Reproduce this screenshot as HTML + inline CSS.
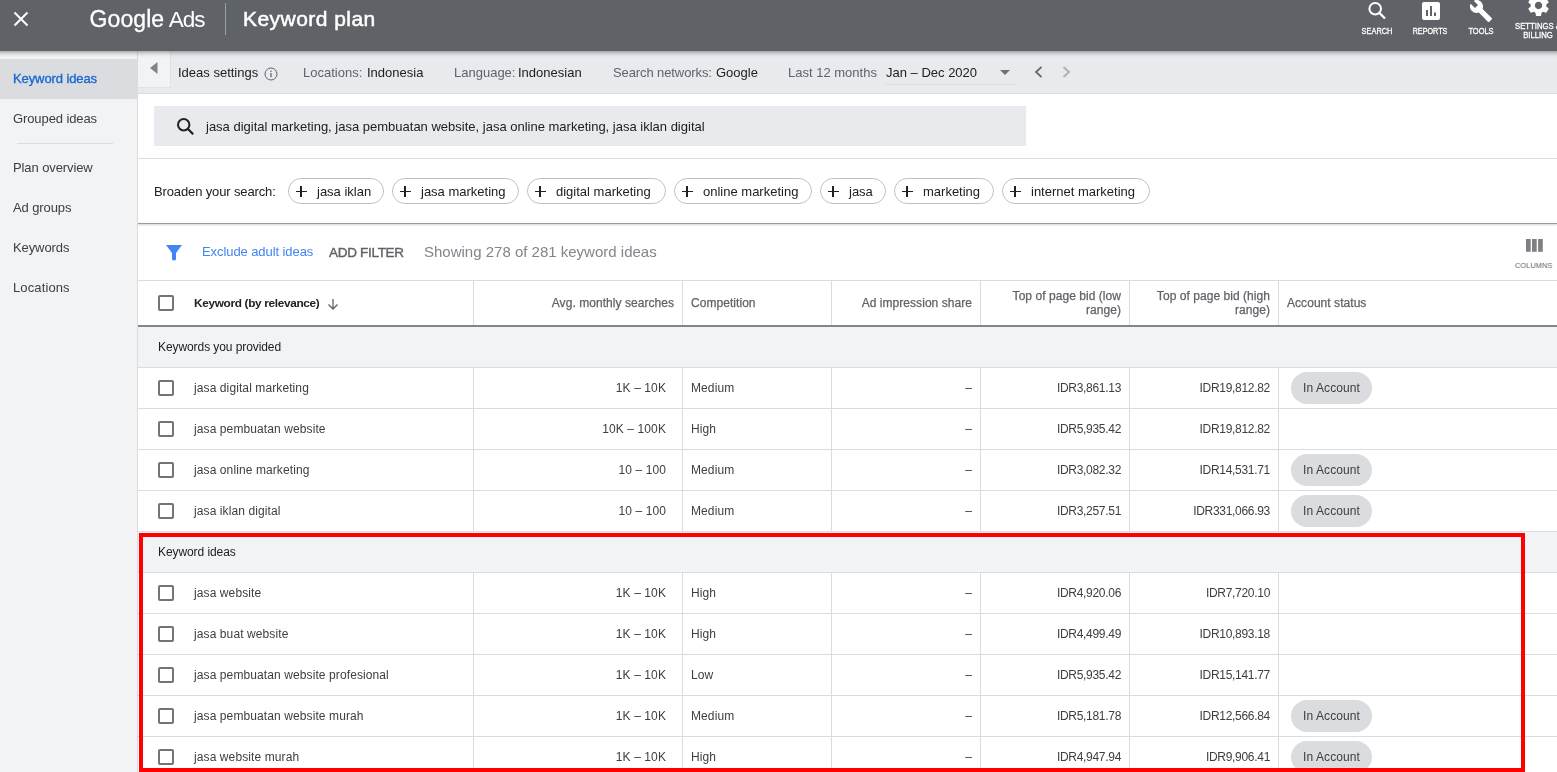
<!DOCTYPE html>
<html lang="en">
<head>
<meta charset="utf-8">
<title>Keyword plan - Google Ads</title>
<style>
*{box-sizing:border-box;margin:0;padding:0}
html,body{width:1557px;height:772px;overflow:hidden;background:#fff}
body{font-family:"Liberation Sans",Arial,sans-serif;font-size:13px;color:#202124;position:relative}
.abs{position:absolute}
#app{position:absolute;left:0;top:0;width:1557px;height:772px;overflow:hidden;will-change:transform}
span,div{white-space:nowrap}
/* header */
#hdr{position:absolute;left:0;top:0;width:1557px;height:51px;background:#5f6368;z-index:5}
#hdr:before{content:"";position:absolute;left:-20px;right:-20px;top:0;height:51px;background:#5f6368;box-shadow:0 1px 5px rgba(0,0,0,.45)}
#hdr .x{position:absolute;left:13px;top:11px}
#hdr .logo{position:absolute;left:89.5px;top:4px;font-size:23px;line-height:30px;color:#fff;letter-spacing:.1px;-webkit-text-stroke:.3px #fff}
#hdr .logo b{font-weight:normal;font-size:22.5px;letter-spacing:-1px;margin-left:4.5px;-webkit-text-stroke:0}
#hdr .sep{position:absolute;left:225px;top:3px;width:1px;height:32px;background:#9aa0a6}
#hdr .title{position:absolute;left:243px;top:4px;font-size:21px;line-height:30px;color:#fff;letter-spacing:.45px;-webkit-text-stroke:.5px #fff}
.hic{position:absolute;top:0;color:#fff;font-size:9px;line-height:9px;text-align:center;letter-spacing:0;-webkit-text-stroke:.3px #fff}
.hic span{transform-origin:50% 50%}
.hic svg{position:absolute;fill:#fff}
/* sidebar */
#side{position:absolute;left:0;top:51px;width:138px;height:721px;background:#f1f3f4;border-right:1px solid #dadce0}
#side .act{position:absolute;left:0;top:8px;width:138px;height:40px;background:#dadce0}
#side .it{position:absolute;left:13px;font-size:13px;line-height:16px;color:#3c4043;letter-spacing:-.1px}
#side .div{position:absolute;left:17px;top:92px;width:96px;height:1px;background:#dadce0}
/* settings bar */
#bar{position:absolute;left:138px;top:51px;width:1419px;height:43px;background:#e8eaed;border-bottom:1px solid #dadce0}
#bar .col{position:absolute;left:0;top:0;width:33px;height:37px;background:#f1f3f4;border-right:1px solid #e0e2e5;border-bottom:1px solid #e0e2e5}
#bar .t{position:absolute;top:14px;font-size:13px;line-height:16px}
#bar .g{color:#5f6368}
#bar .k{color:#202124}
/* search */
#sbox{position:absolute;left:154px;top:106px;width:872px;height:40px;background:#e8eaed}
#sbox span{position:absolute;left:52px;top:13px;font-size:13px;line-height:16px;color:#202124}
#hr1{position:absolute;left:138px;top:158px;width:1419px;height:1px;background:#dadce0}
#bro{position:absolute;left:154px;top:184px;font-size:13px;line-height:16px;color:#202124;letter-spacing:-.13px}
.chip{position:absolute;top:178px;height:26px;border:1px solid #bdc1c6;border-radius:13px;font-size:13px;line-height:26px;color:#202124;padding-left:28px}
.chip i{position:absolute;left:6.5px;top:7px;width:11px;height:11px}
.chip i:before{content:"";position:absolute;left:0;top:4.7px;width:11px;height:1.6px;background:#202124}
.chip i:after{content:"";position:absolute;left:4.7px;top:0;width:1.6px;height:11px;background:#202124}
#hr2{position:absolute;left:138px;top:223px;width:1419px;height:1px;background:#9a9c9f;box-shadow:0 1px 2px rgba(0,0,0,.25)}
/* filter */
#flt .t{position:absolute;line-height:18px}
/* table */
#thead{position:absolute;left:138px;top:280px;width:1419px;height:47px;border-top:1px solid #dadce0;border-bottom:2px solid #80868b;z-index:2}
.th{position:absolute;font-size:12px;line-height:14px;color:#5f6368;-webkit-text-stroke:.25px #5f6368;letter-spacing:.05px}
.vl{position:absolute;top:281px;width:1px;background:#dadce0}
.grp{position:absolute;left:138px;width:1419px;height:41px;background:#f1f3f4;border-bottom:1px solid #dadce0;z-index:2}
.grp span{position:absolute;left:20px;top:13px;font-size:12px;line-height:14px;color:#202124;letter-spacing:-.08px}
.row{position:absolute;left:0;width:1557px;height:41px;border-bottom:1px solid #dadce0}
.row:after{content:"";position:absolute;left:138px;right:0;bottom:0;height:1px;background:#dadce0}
.row{border-bottom:none}
.cb{position:absolute;left:158px;top:12px;width:16px;height:16px;border:2px solid #70757a;border-radius:2px;background:#fff}
.c{position:absolute;top:13px;font-size:12px;line-height:14px;color:#3c4043;letter-spacing:.1px}
.c.kw{left:194px}
.c.n{letter-spacing:-.3px}
.pill{position:absolute;left:1291px;top:4px;width:81px;height:32px;border-radius:16px;background:#dadce0;font-size:12px;line-height:32px;text-align:center;color:#3c4043;letter-spacing:.1px}
#red{position:absolute;left:139px;top:533px;width:1386px;height:239px;border:4px solid #ff0000;z-index:4}
</style>
</head>
<body>
<div id="app">
<div id="side">
  <div class="act"></div>
  <span class="it" style="top:20px;color:#1967d2;-webkit-text-stroke:.35px #1967d2;letter-spacing:-.1px">Keyword ideas</span>
  <span class="it" style="top:60px">Grouped ideas</span>
  <div class="div"></div>
  <span class="it" style="top:109px">Plan overview</span>
  <span class="it" style="top:149px">Ad groups</span>
  <span class="it" style="top:189px">Keywords</span>
  <span class="it" style="top:229px;letter-spacing:.12px">Locations</span>
</div>

<div id="bar">
  <div class="col"><svg width="10" height="14" style="position:absolute;left:11px;top:10px"><path d="M8.5 1 L8.5 13 L1 7 Z" fill="#80868b"/></svg></div>
  <span class="t k" style="left:40px">Ideas settings</span>
  <svg class="abs" style="left:126px;top:15.5px" width="14" height="14" viewBox="0 0 14 14"><circle cx="7" cy="7" r="6" fill="none" stroke="#5f6368" stroke-width="1"/><rect x="6.4" y="6" width="1.2" height="4.2" fill="#5f6368"/><rect x="6.4" y="3.6" width="1.2" height="1.3" fill="#5f6368"/></svg>
  <span class="t g" style="left:165px">Locations:</span><span class="t k" style="left:229px">Indonesia</span>
  <span class="t g" style="left:316px">Language:</span><span class="t k" style="left:380px">Indonesian</span>
  <span class="t g" style="left:475px;letter-spacing:-.1px">Search networks:</span><span class="t k" style="left:578px">Google</span>
  <span class="t g" style="left:650px">Last 12 months</span><span class="t k" style="left:748px">Jan – Dec 2020</span>
  <div class="abs" style="left:748px;top:33px;width:131px;height:1px;background:#dadce0"></div>
  <svg class="abs" style="left:862px;top:19px" width="10" height="5"><path d="M0 0 L10 0 L5 5 Z" fill="#6f7175"/></svg>
  <svg class="abs" style="left:896px;top:15px" width="9" height="12"><path d="M7.5 1 L2 6 L7.5 11" fill="none" stroke="#696b6f" stroke-width="1.8"/></svg>
  <svg class="abs" style="left:924px;top:15px" width="9" height="12"><path d="M1.5 1 L7 6 L1.5 11" fill="none" stroke="#adafb2" stroke-width="1.8"/></svg>
</div>

<div id="sbox">
  <svg class="abs" style="left:21px;top:10px" width="20" height="20" viewBox="0 0 20 20"><circle cx="8.7" cy="8.7" r="5.7" fill="none" stroke="#202124" stroke-width="2"/><path d="M13 13 L18.2 18.2" stroke="#202124" stroke-width="2.3" fill="none"/></svg>
  <span>jasa digital marketing, jasa pembuatan website, jasa online marketing, jasa iklan digital</span>
</div>
<div id="hr1"></div>
<span id="bro">Broaden your search:</span>
<span class="chip" style="left:288px;width:96px"><i></i>jasa iklan</span>
<span class="chip" style="left:392px;width:127px"><i></i>jasa marketing</span>
<span class="chip" style="left:527px;width:139px"><i></i>digital marketing</span>
<span class="chip" style="left:674px;width:138px"><i></i>online marketing</span>
<span class="chip" style="left:820px;width:66px"><i></i>jasa</span>
<span class="chip" style="left:894px;width:100px"><i></i>marketing</span>
<span class="chip" style="left:1002px;width:148px"><i></i>internet marketing</span>
<div id="hr2"></div>

<div id="flt">
  <svg class="abs" style="left:165px;top:244px" width="18" height="18" viewBox="0 0 18 18"><path d="M1 1 H17 L11 9 V15.5 Q9 17.5 7 15.5 V9 Z" fill="#4285f4"/></svg>
  <span class="t" style="left:202px;top:243px;font-size:13px;color:#4285f4;letter-spacing:-.08px">Exclude adult ideas</span>
  <span class="t" style="left:329px;top:244px;font-size:13.5px;color:#5f6368;letter-spacing:-.3px;-webkit-text-stroke:.4px #5f6368">ADD FILTER</span>
  <span class="t" style="left:424px;top:243px;font-size:15px;color:#80868b">Showing 278 of 281 keyword ideas</span>
  <svg class="abs" style="left:1526px;top:239px" width="17" height="13"><rect x="0" y="0" width="4.7" height="12.8" fill="#7f8083"/><rect x="6" y="0" width="4.7" height="12.8" fill="#7f8083"/><rect x="12.1" y="0" width="4.7" height="12.8" fill="#7f8083"/></svg>
  <span class="t" style="left:1514.5px;top:261px;font-size:8px;line-height:10px;color:#5f6368;letter-spacing:0;transform:scaleX(.93);transform-origin:0 50%">COLUMNS</span>
</div>

<div id="thead">
  <span class="cb" style="left:20px;top:14px"></span>
  <span class="th" style="left:56px;top:15px;color:#202124;font-weight:bold;-webkit-text-stroke:0;font-size:11.8px;letter-spacing:-.32px">Keyword (by relevance)</span>
  <svg class="abs" style="left:189px;top:17px" width="12" height="12" viewBox="0 0 12 12"><path d="M6 1 V10.5 M1.5 6.5 L6 11 L10.5 6.5" fill="none" stroke="#5f6368" stroke-width="1.3"/></svg>
  <span class="th" style="right:883px;top:15px">Avg. monthly searches</span>
  <span class="th" style="left:553px;top:15px">Competition</span>
  <span class="th" style="right:585px;top:15px">Ad impression share</span>
  <span class="th" style="right:436px;top:8px;text-align:right">Top of page bid (low<br>range)</span>
  <span class="th" style="right:287px;top:8px;text-align:right">Top of page bid (high<br>range)</span>
  <span class="th" style="left:1149px;top:15px">Account status</span>
</div>
<div class="grp" style="top:327px"><span>Keywords you provided</span></div>
<div class="row" style="top:368px"><span class="cb"></span><span class="c kw">jasa digital marketing</span><span class="c r" style="right:891px">1K – 10K</span><span class="c" style="left:691px">Medium</span><span class="c r" style="right:585px">–</span><span class="c r n" style="right:436px">IDR3,861.13</span><span class="c r n" style="right:287px">IDR19,812.82</span><span class="pill">In Account</span></div>
<div class="row" style="top:409px"><span class="cb"></span><span class="c kw">jasa pembuatan website</span><span class="c r" style="right:891px">10K – 100K</span><span class="c" style="left:691px">High</span><span class="c r" style="right:585px">–</span><span class="c r n" style="right:436px">IDR5,935.42</span><span class="c r n" style="right:287px">IDR19,812.82</span></div>
<div class="row" style="top:450px"><span class="cb"></span><span class="c kw">jasa online marketing</span><span class="c r" style="right:891px">10 – 100</span><span class="c" style="left:691px">Medium</span><span class="c r" style="right:585px">–</span><span class="c r n" style="right:436px">IDR3,082.32</span><span class="c r n" style="right:287px">IDR14,531.71</span><span class="pill">In Account</span></div>
<div class="row" style="top:491px"><span class="cb"></span><span class="c kw">jasa iklan digital</span><span class="c r" style="right:891px">10 – 100</span><span class="c" style="left:691px">Medium</span><span class="c r" style="right:585px">–</span><span class="c r n" style="right:436px">IDR3,257.51</span><span class="c r n" style="right:287px">IDR331,066.93</span><span class="pill">In Account</span></div>
<div class="grp" style="top:532px"><span>Keyword ideas</span></div>
<div class="row" style="top:573px"><span class="cb"></span><span class="c kw">jasa website</span><span class="c r" style="right:891px">1K – 10K</span><span class="c" style="left:691px">High</span><span class="c r" style="right:585px">–</span><span class="c r n" style="right:436px">IDR4,920.06</span><span class="c r n" style="right:287px">IDR7,720.10</span></div>
<div class="row" style="top:614px"><span class="cb"></span><span class="c kw">jasa buat website</span><span class="c r" style="right:891px">1K – 10K</span><span class="c" style="left:691px">High</span><span class="c r" style="right:585px">–</span><span class="c r n" style="right:436px">IDR4,499.49</span><span class="c r n" style="right:287px">IDR10,893.18</span></div>
<div class="row" style="top:655px"><span class="cb"></span><span class="c kw">jasa pembuatan website profesional</span><span class="c r" style="right:891px">1K – 10K</span><span class="c" style="left:691px">Low</span><span class="c r" style="right:585px">–</span><span class="c r n" style="right:436px">IDR5,935.42</span><span class="c r n" style="right:287px">IDR15,141.77</span></div>
<div class="row" style="top:696px"><span class="cb"></span><span class="c kw">jasa pembuatan website murah</span><span class="c r" style="right:891px">1K – 10K</span><span class="c" style="left:691px">Medium</span><span class="c r" style="right:585px">–</span><span class="c r n" style="right:436px">IDR5,181.78</span><span class="c r n" style="right:287px">IDR12,566.84</span><span class="pill">In Account</span></div>
<div class="row" style="top:737px"><span class="cb"></span><span class="c kw">jasa website murah</span><span class="c r" style="right:891px">1K – 10K</span><span class="c" style="left:691px">High</span><span class="c r" style="right:585px">–</span><span class="c r n" style="right:436px">IDR4,947.94</span><span class="c r n" style="right:287px">IDR9,906.41</span><span class="pill">In Account</span></div>

<div class="vl" style="left:473px;height:491px"></div>
<div class="vl" style="left:682px;height:491px"></div>
<div class="vl" style="left:831px;height:491px"></div>
<div class="vl" style="left:980px;height:491px"></div>
<div class="vl" style="left:1129px;height:491px"></div>
<div class="vl" style="left:1278px;height:491px"></div>
<div id="red"></div>

<div id="hdr">
  <svg class="x" width="16" height="16" viewBox="0 0 16 16"><path d="M1.5 1.5 L14.5 14.5 M14.5 1.5 L1.5 14.5" stroke="#fff" stroke-width="2" fill="none"/></svg>
  <span class="logo">Google<b>Ads</b></span>
  <div class="sep"></div>
  <span class="title">Keyword plan</span>
  <div class="hic" style="left:1357px;width:40px"><svg style="left:10px;top:0px" width="22" height="22" viewBox="0 0 22 22"><circle cx="8.2" cy="8.7" r="5.8" fill="none" stroke="#fff" stroke-width="2"/><path d="M12.5 13 L18 18.5" stroke="#fff" stroke-width="2.3"/></svg><span class="abs" style="left:0;width:40px;top:27.3px;transform:scaleX(.823)">SEARCH</span></div>
  <div class="hic" style="left:1405px;width:50px"><svg style="left:17px;top:2px" width="18" height="18" viewBox="0 0 18 18"><path d="M2 0 H16 Q18 0 18 2 V16 Q18 18 16 18 H2 Q0 18 0 16 V2 Q0 0 2 0 Z M4 8 V14 H6 V8 Z M8 4 V14 H10 V4 Z M12 10.5 V14 H14 V10.5 Z" fill-rule="evenodd"/></svg><span class="abs" style="left:0;width:50px;top:27.3px;transform:scaleX(.8)">REPORTS</span></div>
  <div class="hic" style="left:1461px;width:40px"><svg style="left:8px;top:-1px" width="24" height="24" viewBox="0 0 24 24"><path d="M22.7 19 L13.6 9.9 C14.5 7.6 14 4.9 12.1 3 C10.1 1 7.1 0.6 4.7 1.7 L9 6 L6 9 L1.6 4.7 C0.4 7.1 0.9 10.1 2.9 12.1 C4.8 14 7.5 14.5 9.8 13.6 L18.9 22.7 C19.3 23.1 19.9 23.1 20.3 22.7 L22.6 20.4 C23.1 20 23.1 19.3 22.7 19 Z"/></svg><span class="abs" style="left:0;width:40px;top:27.3px;transform:scaleX(.83)">TOOLS</span></div>
  <div class="hic" style="left:1508px;width:60px"><svg style="left:18px;top:-7px" width="25" height="25" viewBox="0 0 24 24"><path d="M19.43 12.98 c.040 -.320 .070 -.640 .070 -.980 s-.030 -.660 -.070 -.980 l2.11 -1.65 c.190 -.150 .240 -.420 .120 -.640 l-2 -3.46 c-.120 -.220 -.390 -.300 -.610 -.220 l-2.49 1 c-.520 -.400 -1.08 -.730 -1.69 -.980 l-.380 -2.65 C14.46 2.18 14.25 2 14 2 h-4 c-.250 0 -.460 .180 -.490 .420 l-.380 2.65 c-.610 .250 -1.17 .590 -1.69 .980 l-2.49 -1 c-.230 -.090 -.490 0 -.610 .220 l-2 3.46 c-.130 .220 -.070 .490 .120 .640 l2.11 1.65 c-.040 .320 -.070 .650 -.070 .980 s.030 .660 .070 .980 l-2.11 1.65 c-.190 .150 -.240 .420 -.120 .640 l2 3.46 c.120 .220 .390 .300 .610 .220 l2.49 -1 c.520 .400 1.08 .730 1.69 .980 l.380 2.65 c.030 .240 .240 .420 .490 .420 h4 c.250 0 .460 -.180 .490 -.420 l.380 -2.65 c.610 -.250 1.17 -.590 1.69 -.980 l2.49 1 c.230 .090 .490 0 .610 -.220 l2 -3.46 c.120 -.220 .070 -.490 -.120 -.640 l-2.11 -1.65 Z M12 15.5 c-1.93 0 -3.5 -1.57 -3.5 -3.5 s1.57 -3.5 3.5 -3.5 3.5 1.57 3.5 3.5 -1.57 3.5 -3.5 3.5 Z"/></svg><span class="abs" style="left:0;width:60px;top:22px;white-space:normal;transform:scaleX(.86)">SETTINGS &amp;<br>BILLING</span></div>
</div>
</div>
</body>
</html>
